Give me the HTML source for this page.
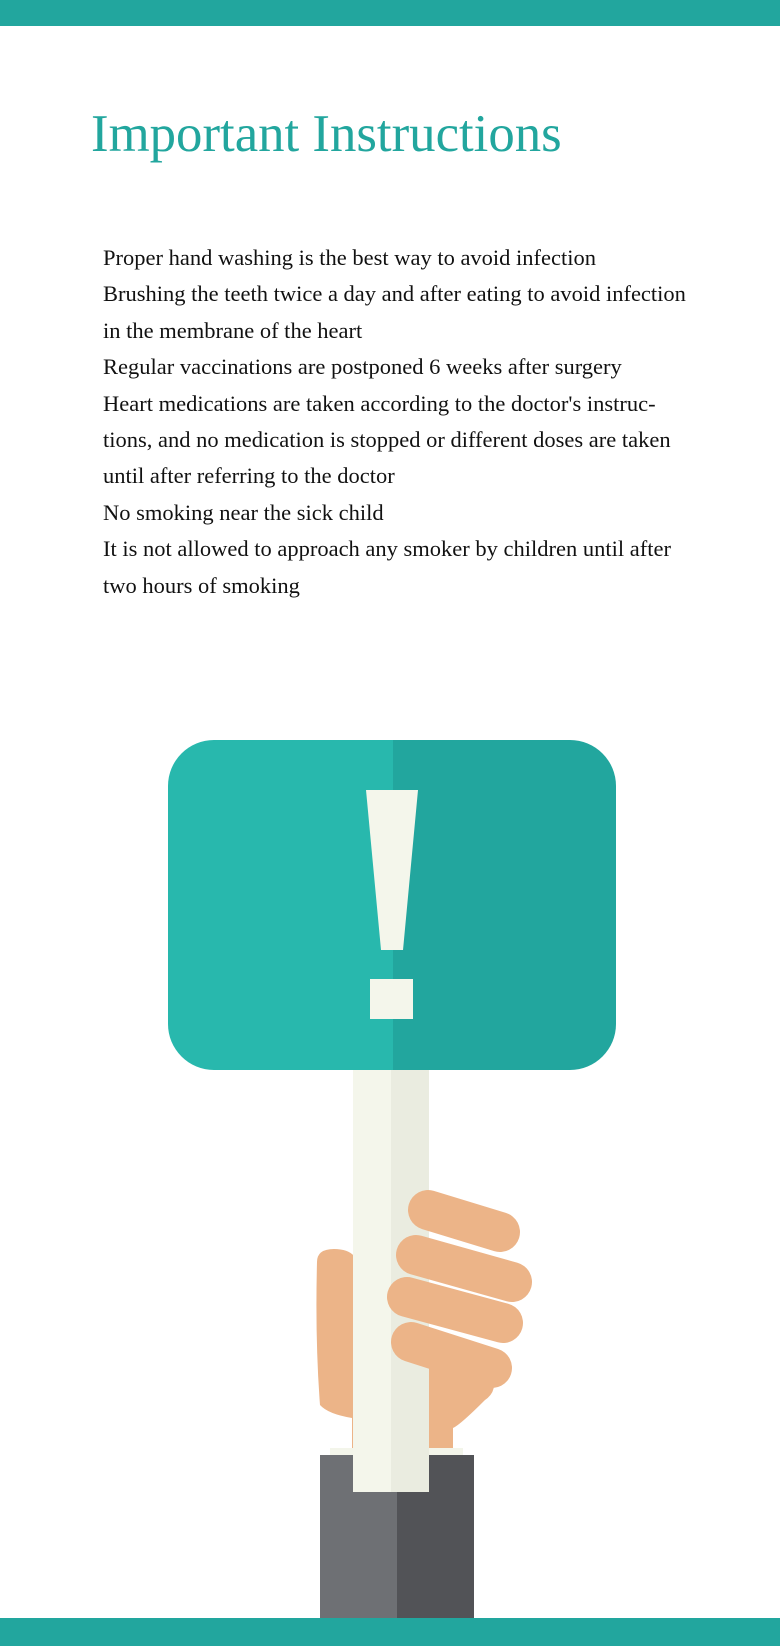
<!DOCTYPE html>
<html><head><meta charset="utf-8"><style>
html,body{margin:0;padding:0;background:#fff}
body{width:780px;height:1646px;position:relative;overflow:hidden}
.bar{position:absolute;left:0;width:780px;background:#22a69e}
h1{position:absolute;left:91px;top:104px;margin:0;font:400 52.8px "Liberation Serif",serif;color:#22a69e;white-space:nowrap}
.txt{position:absolute;left:103px;top:240px;font:400 22.5px/36.4px "Liberation Serif",serif;color:#111;white-space:nowrap}
svg{position:absolute;left:0;top:0}
</style></head><body>
<div class="bar" style="top:0;height:26px"></div>
<h1>Important Instructions</h1>
<div class="txt">Proper hand washing is the best way to avoid infection<br>Brushing the teeth twice a day and after eating to avoid infection<br>in the membrane of the heart<br>Regular vaccinations are postponed 6 weeks after surgery<br>Heart medications are taken according to the doctor's instruc-<br>tions, and no medication is stopped or different doses are taken<br>until after referring to the doctor<br>No smoking near the sick child<br>It is not allowed to approach any smoker by children until after<br>two hours of smoking</div>
<svg width="780" height="1646" viewBox="0 0 780 1646">
<defs><clipPath id="c"><rect x="168" y="740" width="448" height="330" rx="46"/></clipPath></defs>
<g clip-path="url(#c)"><rect x="168" y="740" width="225" height="330" fill="#28b8ad"/><rect x="393" y="740" width="223" height="330" fill="#22a69e"/></g>
<polygon points="366,790 418,790 403,950 381,950" fill="#f4f6eb"/>
<rect x="370" y="979" width="43" height="40" fill="#f4f6eb"/>
<path d="M317 1262 Q317 1249 334 1249 Q348 1249 354 1256 L354 1448 L352 1448 L352 1418 Q328 1414 320 1405 Q315 1340 317 1262Z" fill="#ecb488"/>
<path d="M429 1355 L490 1370 Q500 1390 485 1400 Q460 1425 453 1428 L453 1448 L429 1448Z" fill="#ecb488"/>
<rect x="330" y="1448" width="133" height="8" fill="#f3f5ea"/>
<rect x="320" y="1455" width="77" height="163" fill="#6e7074"/>
<rect x="397" y="1455" width="77" height="163" fill="#525357"/>
<rect x="353" y="1070" width="38" height="422" fill="#f4f6eb"/>
<rect x="391" y="1070" width="38" height="422" fill="#eaece0"/>
<g stroke="#ecb488" stroke-width="40" stroke-linecap="round">
<line x1="428" y1="1210" x2="500" y2="1232"/>
<line x1="416" y1="1255" x2="512" y2="1282"/>
<line x1="407" y1="1297" x2="503" y2="1323"/>
<line x1="411" y1="1342" x2="492" y2="1368"/>
</g>
<polygon points="391,1362 429,1372 429,1492 391,1492" fill="#eaece0"/>
</svg>
<div class="bar" style="top:1618px;height:28px"></div>
</body></html>
